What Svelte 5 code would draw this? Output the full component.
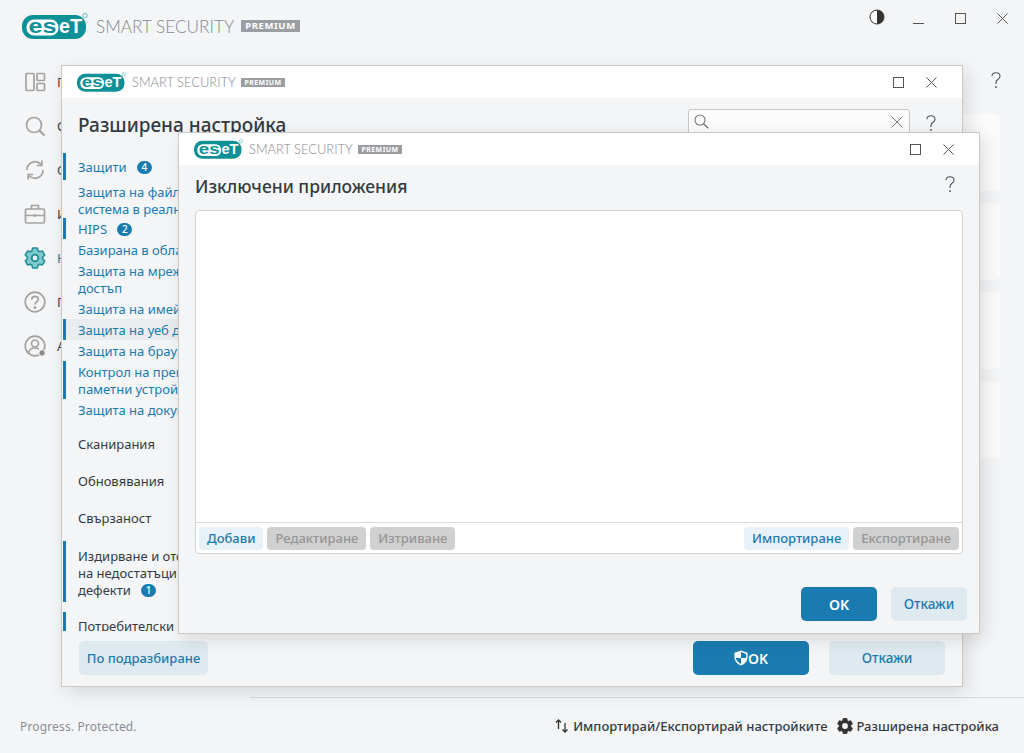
<script>
  const nav = [
    { label: "Преглед", icon: "overview" },
    { label: "Сканиране", icon: "search" },
    { label: "Обновяване", icon: "update" },
    { label: "Инструменти", icon: "tools" },
    { label: "Настройка", icon: "gear", active: true },
    { label: "Помощ и поддръжка", icon: "help" },
    { label: "Акаунт", icon: "account" }
  ];

  const protection = [
    { lines: ["Защита на файловата", "система в реално време"], first: true },
    { lines: ["HIPS"], badge: 2, mark: true },
    { lines: ["Базирана в облака защита"] },
    { lines: ["Защита на мрежовия", "достъп"] },
    { lines: ["Защита на имейл клиенти"] },
    { lines: ["Защита на уеб достъпа"], mark: true, hover: true },
    { lines: ["Защита на браузъра"] },
    { lines: ["Контрол на преносими", "паметни устройства"], mark: true },
    { lines: ["Защита на документи"] }
  ];

  // six rounded teeth around (11, 11)
  function gearPath(outer, inner) {
    let pts = [];
    for (let i = 0; i < 6; i++) {
      let a = (i * 60 - 90) * Math.PI / 180;
      for (let [r, d] of [[inner, -25], [outer, -13], [outer, 13], [inner, 25]]) {
        let t = a + d * Math.PI / 180;
        pts.push((11 + r * Math.cos(t)).toFixed(2) + " " + (11 + r * Math.sin(t)).toFixed(2));
      }
    }
    return "M" + pts.join("L") + "Z";
  }
</script>

{#snippet brand(kind)}
  <div class="brand {kind}">
    <svg class="logo" viewBox="0 0 66 26" aria-label="ESET">
      <rect x="0" y="2" width="64" height="24" rx="11" fill="#0e9097" />
      <rect x="4.500" y="6.500" width="32" height="16" rx="7.500" fill="#fff" />
      <text x="6.500" y="20" class="es" textLength="28" lengthAdjust="spacingAndGlyphs">es</text>
      <text x="37" y="20" class="et" textLength="23" lengthAdjust="spacingAndGlyphs">eT</text>
      <circle cx="63" cy="2.600" r="2.200" fill="none" stroke="#58b4b8" stroke-width="0.900" />
    </svg>
    <span class="name">SMART SECURITY</span>
    <span class="tier">PREMIUM</span>
  </div>
{/snippet}

{#snippet maxClose()}
  <div class="win-btns">
    <svg width="11" height="11" viewBox="0 0 11 11"><rect x="0.500" y="0.500" width="10" height="10" fill="none" stroke="#555" /></svg>
    <svg width="11" height="11" viewBox="0 0 11 11"><path d="M0.500 0.500l10 10M10.500 0.500l-10 10" fill="none" stroke="#555" /></svg>
  </div>
{/snippet}

{#snippet question()}
  <svg class="q" width="10" height="17" viewBox="0 0 10 17"><path d="M1 4.200C1 2 2.800.8 5 .8s4 1.300 4 3.400c0 1.600-1 2.500-2.200 3.300C5.600 8.300 5 9.100 5 10.600v1.400" fill="none" stroke="#4a5560" stroke-width="1.100" /><circle cx="5" cy="15" r="0.900" fill="#4a5560" /></svg>
{/snippet}

{#snippet navIcon(name)}
  <svg width="22" height="22" viewBox="0 0 22 22" fill="none" stroke="#a3a3a3" stroke-width="1.700">
    {#if name === "overview"}
      <rect x="2" y="2.500" width="8" height="17" rx="1" />
      <rect x="13" y="2.500" width="7.500" height="7" rx="1" />
      <rect x="13" y="12.500" width="7.500" height="7" rx="1" />
    {:else if name === "search"}
      <circle cx="10" cy="10" r="7.500" />
      <path d="M15.500 15.500l5 5" stroke-width="2.200" />
    {:else if name === "update"}
      <path d="M3 11a8 8 0 0 1 14-5.500M19 11a8 8 0 0 1-14 5.500" />
      <path d="M17.800 1.500v5h-5M4.200 20.500v-5h5" />
    {:else if name === "tools"}
      <rect x="1.500" y="6" width="19" height="14" rx="1.500" />
      <path d="M7.500 6V2.500h7V6M1.500 12.500h19M11 11v3" />
    {:else if name === "gear"}
      <path d={gearPath(10.200, 7.700)} fill="#7cc9ce" stroke="#1f8d93" stroke-width="1.500" stroke-linejoin="round" />
      <circle cx="11" cy="11" r="3.300" fill="#e3f2f3" stroke="#1f8d93" stroke-width="1.800" />
    {:else if name === "help"}
      <circle cx="11" cy="11" r="9.800" />
      <path d="M7.800 8.500c0-2 1.500-3.200 3.300-3.200s3.200 1.100 3.200 2.900c0 2.600-3.300 2.500-3.300 5.300" />
      <circle cx="11" cy="16.500" r="0.700" />
    {:else}
      <circle cx="11" cy="11" r="9.800" />
      <circle cx="11" cy="8.500" r="3.500" />
      <path d="M4.500 18c.6-3.500 3-5 6.500-5 1.500 0 2.800.3 3.800 1" />
      <circle cx="18" cy="18" r="3.200" fill="#8a8a8a" stroke="#f3f5f7" stroke-width="1" />
    {/if}
  </svg>
{/snippet}

<div class="screen">
  <header class="top">
    {@render brand("big")}
    <div class="top-btns">
      <svg class="contrast" width="16" height="16" viewBox="0 0 16 16"><circle cx="8" cy="8" r="7" fill="#fff" stroke="#333" /><path d="M8 1a7 7 0 0 1 0 14z" fill="#333" /></svg>
      <svg width="11" height="11" viewBox="0 0 11 11"><path d="M0 10.500h11" stroke="#555" /></svg>
      <svg width="11" height="11" viewBox="0 0 11 11"><rect x="0.500" y="0.500" width="10" height="10" fill="none" stroke="#555" /></svg>
      <svg width="11" height="11" viewBox="0 0 11 11"><path d="M0.500 0.500l10 10M10.500 0.500l-10 10" fill="none" stroke="#555" /></svg>
    </div>
  </header>

  <div class="middle">
    <nav class="side">
      {#each nav as n}
        <div class="nav-item" class:active={n.active}>
          {@render navIcon(n.icon)}
          <span>{n.label}</span>
        </div>
      {/each}
    </nav>
    <main class="content">
      <div class="help-row">{@render question()}</div>
      <div class="cards">
        <div class="card"></div>
        <div class="card"></div>
        <div class="card"></div>
        <div class="card"></div>
      </div>
    </main>
  </div>

  <footer class="foot">
    <span class="slogan">Progress. Protected.</span>
    <div class="foot-links">
      <span class="link">
        <svg width="14" height="14" viewBox="0 0 14 14" fill="none" stroke="#333" stroke-width="1.300"><path d="M3.500 10V1M1 3.500L3.500 1 6 3.500M10 4v9M7.500 10.500L10 13l2.500-2.500" /></svg>
        Импортирай/Експортирай настройките
      </span>
      <span class="link">
        <svg width="16" height="16" viewBox="0 0 22 22"><path d={gearPath(10.800, 8)} fill="#333" stroke="#333" stroke-linejoin="round" /><circle cx="11" cy="11" r="4" fill="#f3f5f7" /></svg>
        Разширена настройка
      </span>
    </div>
  </footer>

  <section class="window adv">
    <div class="win-head">
      {@render brand("small")}
      {@render maxClose()}
    </div>
    <div class="adv-title">
      <h1>Разширена настройка</h1>
      <div class="search">
        <svg width="15" height="15" viewBox="0 0 15 15" fill="none" stroke="#777" stroke-width="1.100"><circle cx="6" cy="6" r="5" /><path d="M9.700 9.700l4.500 4.500" stroke-width="1.400" /></svg>
        <svg width="12" height="12" viewBox="0 0 12 12" fill="none" stroke="#777"><path d="M.5.5l11 11M11.500.5l-11 11" /></svg>
      </div>
      {@render question()}
    </div>
    <div class="tree">
      <div class="tree-item head marked">Защити <b class="badge">4</b></div>
      {#each protection as p}
        <div class="tree-item" class:marked={p.mark} class:hover={p.hover} class:first={p.first}>
          {#each p.lines as line, i}
            {#if i > 0}<br />{/if}{line}
          {/each}
          {#if p.badge}<b class="badge">{p.badge}</b>{/if}
        </div>
      {/each}
      <div class="tree-item group scan">Сканирания</div>
      <div class="tree-item group">Обновявания</div>
      <div class="tree-item group">Свързаност</div>
      <div class="tree-item group marked multi">Издирване и отстраняване<br />на недостатъци и<br />дефекти <b class="badge">1</b></div>
      <div class="tree-item group marked last">Потребителски интерфейс</div>
    </div>
    <div class="adv-actions">
      <button class="btn soft wide">По подразбиране</button>
      <span class="spacer"></span>
      <button class="btn primary big-btn">
        <svg width="14" height="16" viewBox="0 0 15 17"><path d="M7.500 0.500L14.500 3v5c0 4-3 7-7 8.500C3.500 15 .5 12 .5 8V3z" fill="#fff" /><path d="M7.500 2.200L13 4.100V8.500H7.500zM7.500 8.500V14.900C4.700 13.600 2.400 11.500 2 8.500z" fill="#1a7bb0" /></svg>OK
      </button>
      <button class="btn soft big-btn">Откажи</button>
    </div>
  </section>

  <section class="window excl">
    <div class="win-head">
      {@render brand("small")}
      {@render maxClose()}
    </div>
    <div class="excl-title">
      <h2>Изключени приложения</h2>
      {@render question()}
    </div>
    <div class="panel">
      <div class="list"></div>
      <div class="toolbar">
        <button class="tool">Добави</button>
        <button class="tool off" disabled>Редактиране</button>
        <button class="tool off" disabled>Изтриване</button>
        <span class="spacer"></span>
        <button class="tool">Импортиране</button>
        <button class="tool off" disabled>Експортиране</button>
      </div>
    </div>
    <div class="excl-actions">
      <button class="btn primary">OK</button>
      <button class="btn soft">Откажи</button>
    </div>
  </section>
</div>

<style>
  :global(body) {
    margin: 0;
    background: #f3f5f7;
  }
  .screen {
    position: relative;
    width: 1024px;
    height: 753px;
    overflow: hidden;
    display: flex;
    flex-direction: column;
    background: #f3f5f7;
    font-family: "Noto Sans", "Open Sans", sans-serif;
    font-size: 13px;
    color: #333b42;
  }

  /* brand */
  .brand {
    display: flex;
    align-items: center;
  }
  .logo {
    display: block;
    overflow: visible;
  }
  .es,
  .et {
    font-family: "Liberation Sans", sans-serif;
    font-weight: 700;
    font-size: 20px;
  }
  .es {
    fill: #0e9097;
  }
  .et {
    fill: #fff;
  }
  .name {
    font-family: Lato, sans-serif;
    font-weight: 300;
    color: #85898e;
    white-space: nowrap;
  }
  .tier {
    background: #9a9ea3;
    color: #fff;
    font-family: "Noto Sans", sans-serif;
    font-weight: 700;
    white-space: nowrap;
    text-align: center;
  }
  .big .logo {
    width: 66px;
    height: 26px;
  }
  .big .name {
    font-size: 17.200px;
    margin-left: 8px;
    width: 138px;
  }
  .big .tier {
    font-size: 9.500px;
    line-height: 12px;
    width: 59px;
    margin-left: 7px;
    letter-spacing: 0.600px;
  }
  .small .logo {
    width: 49px;
    height: 20px;
  }
  .small .name {
    font-size: 12.900px;
    margin-left: 6px;
    width: 104px;
  }
  .small .tier {
    font-size: 7px;
    line-height: 9px;
    width: 44px;
    margin-left: 5px;
    letter-spacing: 0.450px;
  }

  /* background app */
  .top {
    height: 54px;
    flex: none;
    display: flex;
    align-items: flex-start;
    justify-content: space-between;
    padding: 13px 16px 0 22px;
    box-sizing: border-box;
  }
  .top-btns {
    display: flex;
    align-items: center;
    gap: 31px;
    height: 10px;
  }
  .contrast {
    margin: -2px -3px 0 0;
  }
  .middle {
    flex: 1;
    display: flex;
    min-height: 0;
  }
  .side {
    width: 250px;
    flex: none;
    display: flex;
    flex-direction: column;
    gap: 22px;
    padding: 17px 0 0 24px;
    box-sizing: border-box;
  }
  .nav-item {
    display: flex;
    align-items: center;
    gap: 11px;
    height: 22px;
    white-space: nowrap;
    font-size: 13px;
    color: #444;
  }
  .nav-item.active {
    color: #15858b;
  }
  .content {
    flex: 1;
    padding: 0 24px 0 20px;
  }
  .help-row {
    display: flex;
    justify-content: flex-end;
    padding: 18px 0 0;
    height: 42px;
    margin-right: -1px;
  }
  .cards {
    display: flex;
    flex-direction: column;
    gap: 12px;
  }
  .card {
    height: 77px;
    border-radius: 5px;
    background: #fbfbfc;
  }
  .foot {
    height: 56px;
    flex: none;
    box-sizing: border-box;
    display: flex;
    align-items: center;
    justify-content: space-between;
    padding: 2px 25px 0 20px;
    position: relative;
  }
  .foot::before {
    content: "";
    position: absolute;
    left: 250px;
    right: 0;
    top: 0;
    border-top: 1px solid #d9dadc;
  }
  .slogan {
    color: #8b8f93;
    font-size: 12px;
    letter-spacing: 0.150px;
  }
  .foot-links {
    display: flex;
    gap: 9px;
  }
  .link {
    display: flex;
    align-items: center;
    gap: 4px;
    color: #333b42;
    font-weight: 500;
  }

  /* windows */
  .window {
    position: absolute;
    box-sizing: border-box;
    background: #f3f5f7;
    border: 1px solid #c9c9c9;
    box-shadow: 4px 5px 18px rgba(0, 0, 0, 0.12);
    display: flex;
    flex-direction: column;
  }
  .win-head {
    height: 32px;
    flex: none;
    background: #fff;
    display: flex;
    align-items: center;
    justify-content: space-between;
    padding: 0 25px 0 15px;
  }
  .win-btns {
    display: flex;
    gap: 22px;
  }
  .q {
    flex: none;
  }

  /* advanced setup */
  .adv {
    left: 61px;
    top: 65px;
    width: 902px;
    height: 622px;
  }
  .adv-title {
    height: 45px;
    flex: none;
    box-sizing: border-box;
    display: flex;
    align-items: flex-start;
    padding: 11px 25px 0 16px;
  }
  .adv-title h1 {
    margin: 4px auto 0 0;
    font-size: 19px;
    line-height: 24px;
    font-weight: 500;
    color: #333b42;
  }
  .search {
    width: 222px;
    height: 40px;
    flex: none;
    box-sizing: border-box;
    border: 1px solid #c9c9c9;
    border-radius: 3px;
    background: #fcfcfc;
    display: flex;
    justify-content: space-between;
    padding: 4px 6px 0 5px;
    margin-right: 16px;
  }
  .search svg:last-child {
    margin-top: 2px;
  }
  .adv-title .q {
    margin-top: 6px;
    margin-right: 1px;
  }
  .tree {
    flex: 1;
    min-height: 0;
    overflow: hidden;
    padding: 10px 0 0 1px;
    margin-bottom: 10px;
  }
  .tree-item {
    position: relative;
    padding: 3px 0 1px 12px;
    line-height: 17px;
    color: #1a7bb0;
    font-weight: 400;
    white-space: nowrap;
    border-left: 3px solid transparent;
  }
  .tree-item.head {
    padding: 6px 0 4px 12px;
  }
  .tree-item.first {
    padding: 4px 0 0 12px;
  }
  .tree-item.marked {
    border-left-color: #1a7bb0;
  }
  .tree-item.hover {
    background: #ebecee;
  }
  .tree-item.group {
    color: #333b42;
    padding: 11px 0 9px 12px;
  }
  .tree-item.scan {
    margin-top: 5px;
  }
  .tree-item.multi {
    padding-top: 7px;
    padding-bottom: 3px;
    margin-top: 5px;
    margin-bottom: 10px;
  }
  .tree-item.last {
    padding-top: 6px;
  }
  .badge {
    display: inline-block;
    min-width: 15px;
    height: 13px;
    margin-left: 7px;
    border-radius: 7px;
    background: #1a7bb0;
    color: #fff;
    font-size: 10px;
    line-height: 13px;
    text-align: center;
    font-weight: 500;
    vertical-align: 1px;
  }
  .adv-actions {
    display: flex;
    align-items: center;
    gap: 20px;
    padding: 0 17px 11px 17px;
  }
  .spacer {
    flex: 1;
  }
  .btn {
    height: 34px;
    width: 76px;
    border: 0;
    border-radius: 5px;
    font-family: inherit;
    font-size: 13.500px;
    font-weight: 500;
    padding: 0;
    display: inline-flex;
    align-items: center;
    justify-content: center;
  }
  .btn.primary {
    background: #1a7bb0;
    color: #fff;
    font-weight: 600;
    font-size: 14px;
  }
  .btn.soft {
    background: #dfe9f0;
    color: #1a7bb0;
  }
  .btn.wide {
    width: 129px;
    font-size: 13px;
  }
  .btn.big-btn {
    width: 116px;
  }

  /* excluded apps */
  .excl {
    left: 178px;
    top: 132px;
    width: 802px;
    height: 502px;
  }
  .excl-title {
    height: 45px;
    flex: none;
    box-sizing: border-box;
    display: flex;
    align-items: center;
    justify-content: space-between;
    padding: 0 24px 4px 16px;
  }
  .excl-title h2 {
    margin: 0;
    font-size: 17.500px;
    font-weight: 500;
    color: #333b42;
  }
  .excl-title .q {
    margin-top: -2px;
  }
  .panel {
    margin: 0 16px;
    height: 344px;
    box-sizing: border-box;
    border: 1px solid #d2d3d5;
    border-radius: 4px;
    background: #fff;
    display: flex;
    flex-direction: column;
    flex: none;
  }
  .list {
    flex: 1;
    border-bottom: 1px solid #d9dadc;
  }
  .toolbar {
    height: 30px;
    flex: none;
    box-sizing: border-box;
    display: flex;
    align-items: center;
    gap: 4px;
    padding: 0 3px;
  }
  .tool {
    height: 23px;
    padding: 0 8px;
    border: 0;
    border-radius: 4px;
    background: #e8f1f7;
    color: #1a7bb0;
    font-family: inherit;
    font-size: 13px;
    font-weight: 500;
  }
  .tool.off {
    background: #d0d0d0;
    color: #969696;
  }
  .excl-actions {
    display: flex;
    justify-content: flex-end;
    gap: 14px;
    margin-top: 33px;
    padding-right: 12px;
  }
</style>
